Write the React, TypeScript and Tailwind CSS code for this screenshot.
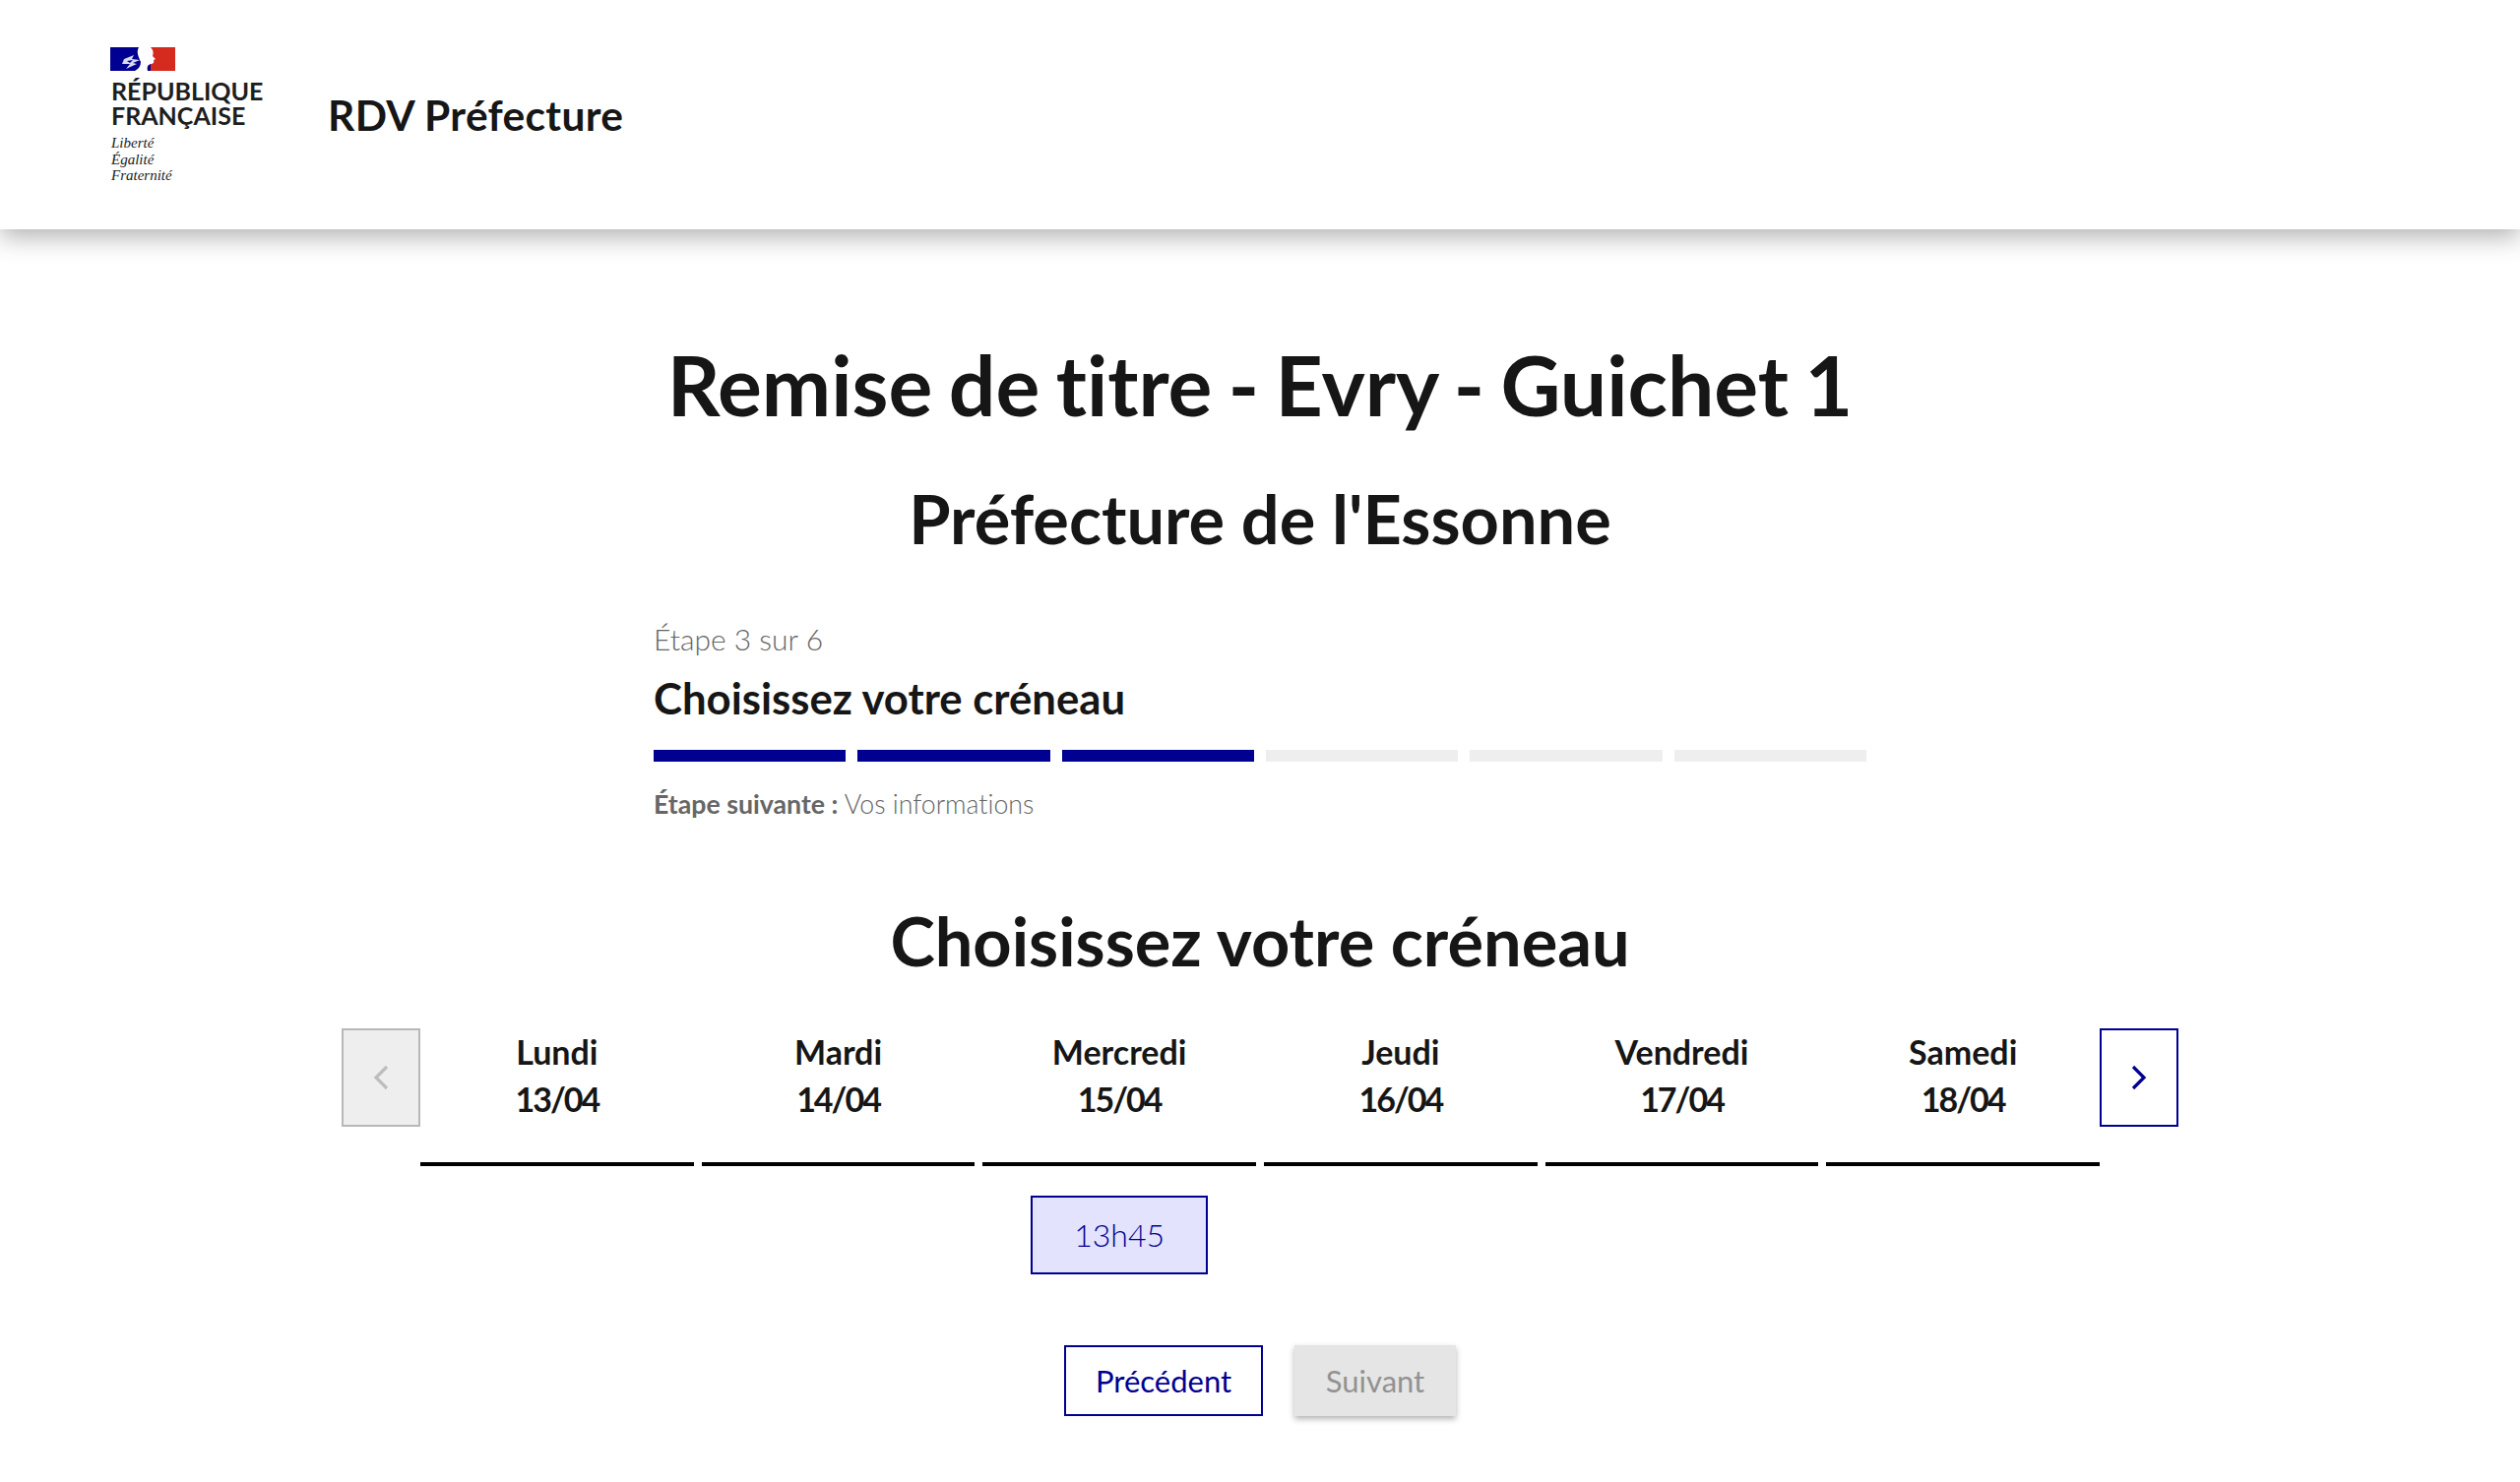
import React from "react";

const days = [
  ["Lundi", "13/04"],
  ["Mardi", "14/04"],
  ["Mercredi", "15/04"],
  ["Jeudi", "16/04"],
  ["Vendredi", "17/04"],
  ["Samedi", "18/04"],
];

function Flag() {
  return (
    <svg width="66" height="24" viewBox="0 0 66 24" className="block">
      <rect width="66" height="24" fill="#000091" />
      <rect x="41" width="25" height="24" fill="#d52b1e" />
      <path d="M29 0 L41 0 C44 3 44 6 43 9 L46 12 L44 13 C45 16 43 17 41 17 C38 18 37 20 38 24 L25 24 C29 22 31 19 31 15 C29 10 26 5 29 0 Z" fill="#fff" />
      <path d="M14 12 L24 8 L22 12 L30 13 L23 16 L27 17 L16 22 L20 17 L12 17 Z" fill="#fff" opacity="0.85" />
      <path d="M17 14 L23 13 L20 16 Z" fill="#000091" />
    </svg>
  );
}

function Chevron({ dir, color }: { dir: "l" | "r"; color: string }) {
  return (
    <svg width="16" height="26" viewBox="0 0 16 26" fill="none">
      <path d={dir === "r" ? "M2 2 L13 13 L2 24" : "M14 2 L3 13 L14 24"} stroke={color} strokeWidth="3.2" />
    </svg>
  );
}

export default function App() {
  return (
    <div className="min-h-[1506px] bg-white text-[#161616] font-['Lato','Noto_Sans',sans-serif] [font-variant-ligatures:none]">
      <header className="h-[233px] flex items-center bg-white shadow-[0_8px_24px_rgba(0,0,0,0.3)] pl-[113px]">
        <div className="w-[220px] h-[140px] mt-[3px]">
          <div className="-ml-px"><Flag /></div>
          <div className="mt-[8px] text-[25px] leading-[25px] font-bold text-[#1e1e1e]">
            RÉPUBLIQUE
            <br />
            FRANÇAISE
          </div>
          <div className="mt-[7px] text-[15px] leading-[16.5px] italic text-[#222] font-['Liberation_Serif',serif]">
            Liberté
            <br />
            Égalité
            <br />
            Fraternité
          </div>
        </div>
        <div className="text-[42.5px] leading-[48px] font-bold tracking-[0.3px]">RDV Préfecture</div>
      </header>

      <main className="flex flex-col items-center">
        <h1 className="mt-[110px] text-[84px] leading-[96px] font-bold [word-spacing:-4px]">Remise de titre - Evry - Guichet 1</h1>
        <h2 className="mt-[52px] text-[68.5px] leading-[72px] font-bold">Préfecture de l'Essonne</h2>

        <section className="mt-[66px] w-[1232px]">
          <div className="text-[30px] leading-[40px] font-light text-[#666]">Étape 3 sur 6</div>
          <div className="mt-[20px] text-[43.7px] leading-[40px] font-bold">Choisissez votre créneau</div>
          <div className="mt-[33px] grid grid-cols-6 gap-[12px]">
            {[0, 1, 2, 3, 4, 5].map((i) => (
              <div key={i} className={i < 3 ? "h-[12px] bg-[#000091]" : "h-[12px] bg-[#eeeeee]"} />
            ))}
          </div>
          <div className="mt-[27px] text-[26.7px] leading-[32px] text-[#666] font-light">
            <b className="font-bold">Étape suivante :</b> Vos informations
          </div>
        </section>

        <h2 className="mt-[87px] text-[68.5px] leading-[72px] font-bold">Choisissez votre créneau</h2>

        <section className="mt-[53px] w-[1866px] flex items-start">
          <button className="w-[80px] h-[100px] shrink-0 flex items-center justify-center bg-[#eeeeee] border-2 border-[#b8b8b8]">
            <Chevron dir="l" color="#bdbdbd" />
          </button>
          <div className="flex-1 grid grid-cols-6 gap-[8px]">
            {days.map(([d, n], i) => (
              <div key={d} className="flex flex-col items-center">
                <div className="w-full h-[140px] border-b-4 border-black text-center text-[34px] leading-[48px] font-bold">
                  {d}
                  <br />
                  <span className="tracking-[-2px]">{n}</span>
                </div>
                {i === 2 && (
                  <button className="mt-[30px] w-[180px] h-[80px] bg-[#e3e3fd] border-2 border-[#000091] text-[#000091] text-[32px] font-light">
                    13h45
                  </button>
                )}
              </div>
            ))}
          </div>
          <button className="w-[80px] h-[100px] shrink-0 flex items-center justify-center bg-white border-2 border-[#000091]">
            <Chevron dir="r" color="#000091" />
          </button>
        </section>

        <div className="mt-[72px] flex gap-[32px]">
          <button className="w-[202px] h-[72px] border-2 border-[#000091] text-[#000091] text-[31px] font-normal">Précédent</button>
          <button className="w-[164px] h-[72px] bg-[#e5e5e5] text-[#929292] text-[31px] font-normal shadow-[0_3px_6px_rgba(0,0,0,0.3)]">Suivant</button>
        </div>
      </main>
    </div>
  );
}
